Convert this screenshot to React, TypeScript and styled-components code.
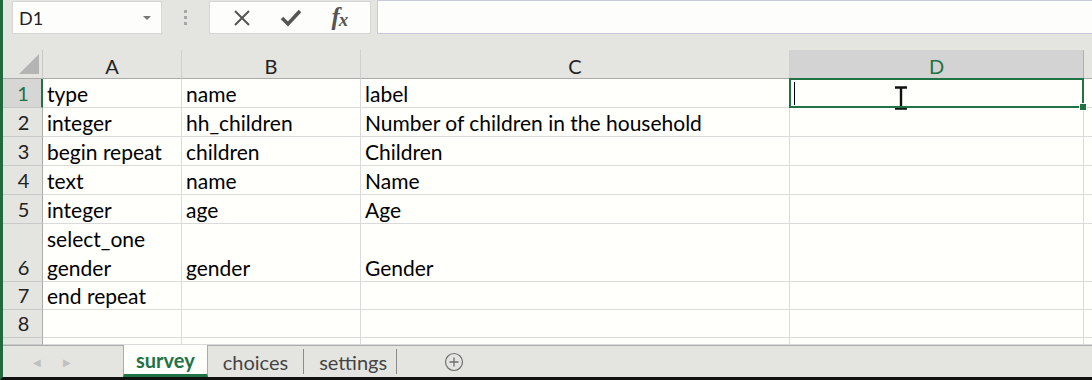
import styled, { createGlobalStyle } from "styled-components"

const GlobalStyle = createGlobalStyle`
  html, body {
    margin: 0;
    padding: 0;
    background: #e4e4e0;
  }
  * {
    box-sizing: border-box;
  }
`

const font = `"Lato", "Open Sans", "Liberation Sans", sans-serif`
const green = "#217346"

const columns = ["A", "B", "C", "D"]
const activeColumn = "D"

type RowData = {
  height: number
  cells: string[][]
}

// each cell is a list of lines (row 6 wraps onto two lines)
const rows: RowData[] = [
  { height: 29, cells: [["type"], ["name"], ["label"], []] },
  { height: 29, cells: [["integer"], ["hh_children"], ["Number of children in the household"], []] },
  { height: 29, cells: [["begin repeat"], ["children"], ["Children"], []] },
  { height: 29, cells: [["text"], ["name"], ["Name"], []] },
  { height: 29, cells: [["integer"], ["age"], ["Age"], []] },
  { height: 58, cells: [["select_one", "gender"], ["gender"], ["Gender"], []] },
  { height: 28, cells: [["end repeat"], [], [], []] },
  { height: 28, cells: [[], [], [], []] },
]

const sheets = ["survey", "choices", "settings"]

const App = () => {
  return (
    <>
      <GlobalStyle />
      <Window>
        <FormulaBar>
          <NameBox>
            <span>D1</span>
            <DropArrow />
          </NameBox>
          <Grip>
            <i />
            <i />
            <i />
          </Grip>
          <FormulaButtons>
            <IconButton>
              <svg width="18" height="18" viewBox="0 0 18 18">
                <path d="M2 2 L16 16 M16 2 L2 16" stroke="#555" strokeWidth="2" fill="none" />
              </svg>
            </IconButton>
            <IconButton>
              <svg width="22" height="18" viewBox="0 0 22 18">
                <path d="M2 9 L8 15 L20 2" stroke="#555" strokeWidth="3.6" fill="none" strokeLinejoin="miter" />
              </svg>
            </IconButton>
            <FxLabel>
              f<span>x</span>
            </FxLabel>
          </FormulaButtons>
          <FormulaInput />
        </FormulaBar>

        <Sheet $rows={rows.map((r) => r.height)}>
          <Corner>
            <svg width="20" height="20" viewBox="0 0 20 20">
              <path d="M20 0 L20 20 L0 20 Z" fill="#b4b4b4" />
            </svg>
          </Corner>
          {columns.map((c) => (
            <ColHead key={c} $active={c === activeColumn}>
              {c}
            </ColHead>
          ))}
          <HeadFiller />

          {rows.map((row, i) => (
            <Row key={i} index={i} row={row} />
          ))}

          <RowHead $active={false} />
          {columns.map((c) => (
            <Cell key={c} />
          ))}
          <Filler />
        </Sheet>

        <TabBar>
          <TabArrows>
            <span>◀</span>
            <span>▶</span>
          </TabArrows>
          {sheets.map((s, i) => (
            <Tab key={s} $active={i === 0} $last={i === sheets.length - 1}>
              {s}
            </Tab>
          ))}
          <AddSheet>
            <svg width="20" height="20" viewBox="0 0 20 20">
              <circle cx="10" cy="10" r="8.5" stroke="#6f6f6f" strokeWidth="1.2" fill="none" />
              <path d="M10 5.5 V14.5 M5.5 10 H14.5" stroke="#6f6f6f" strokeWidth="1.3" />
            </svg>
          </AddSheet>
        </TabBar>
      </Window>
    </>
  )
}

const Row = ({ index, row }: { index: number; row: RowData }) => {
  const selectedRow = index === 0
  return (
    <>
      <RowHead $active={selectedRow}>{index + 1}</RowHead>
      {row.cells.map((lines, ci) => {
        const selected = selectedRow && columns[ci] === activeColumn
        return (
          <Cell key={ci} $selected={selected}>
            {lines.length > 0 && (
              <CellText>
                {lines.map((l) => (
                  <div key={l}>{l}</div>
                ))}
              </CellText>
            )}
            {selected && (
              <>
                <Caret />
                <IBeam>
                  <svg width="16" height="24" viewBox="0 0 16 24">
                    <path d="M2 1.5 H14 M2 22.5 H14 M8 1.5 V22.5" stroke="#111" strokeWidth="2.4" fill="none" />
                  </svg>
                </IBeam>
              </>
            )}
          </Cell>
        )
      })}
      <Filler />
    </>
  )
}

const Window = styled.div`
  width: 1092px;
  height: 380px;
  display: flex;
  flex-direction: column;
  border-left: 3px solid #1f6b3f;
  border-bottom: 3px solid #111;
  background: #e4e4e0;
  font-family: ${font};
  overflow: hidden;
`

const FormulaBar = styled.div`
  height: 50px;
  display: flex;
  align-items: flex-start;
  padding-top: 1px;
`

const NameBox = styled.div`
  width: 150px;
  height: 33px;
  margin-left: 9px;
  background: #fdfdfb;
  border: 1px solid #d6d6d6;
  display: flex;
  align-items: center;
  justify-content: space-between;
  padding: 0 10px 0 6px;
  font-size: 18px;
  color: #222;
`

const DropArrow = styled.span`
  width: 0;
  height: 0;
  border-left: 4px solid transparent;
  border-right: 4px solid transparent;
  border-top: 4px solid #777;
`

const Grip = styled.div`
  width: 47px;
  height: 33px;
  display: flex;
  flex-direction: column;
  align-items: center;
  justify-content: center;
  gap: 3px;

  i {
    width: 3px;
    height: 3px;
    background: #a6a6a6;
    display: block;
  }
`

const FormulaButtons = styled.div`
  width: 162px;
  height: 33px;
  background: #fdfdfb;
  border: 1px solid #d6d6d6;
  display: flex;
  align-items: center;
  justify-content: space-around;
  padding: 0 8px;
`

const IconButton = styled.span`
  display: flex;
  align-items: center;
`

const FxLabel = styled.span`
  font-family: "Liberation Serif", serif;
  font-style: italic;
  font-size: 25px;
  line-height: 25px;
  color: #555;
  font-weight: bold;
  letter-spacing: -1px;

  span {
    font-size: 19px;
    position: relative;
    top: 1px;
  }
`

const FormulaInput = styled.div`
  flex: 1;
  height: 34px;
  margin-left: 6px;
  margin-top: -1px;
  background: #fdfdfb;
  border: 1px solid #c9c9dc;
  border-right: none;
`

const Sheet = styled.div<{ $rows: number[] }>`
  flex: 1;
  display: grid;
  grid-template-columns: 40px 139px 179px 429px 294px 1fr;
  grid-template-rows: 29px ${(p) => p.$rows.map((h) => `${h}px`).join(" ")} 1fr;
  background: #fffffb;
  overflow: hidden;
`

const Corner = styled.div`
  background: #e4e4e0;
  border-bottom: 1px solid #ababab;
  border-right: 1px solid #c8c8c8;
  display: flex;
  align-items: flex-end;
  justify-content: flex-end;
  padding: 0 3px 4px 0;
`

const ColHead = styled.div<{ $active: boolean }>`
  background: ${(p) => (p.$active ? "#d3d3d3" : "#e4e4e0")};
  color: ${(p) => (p.$active ? green : "#222")};
  border-bottom: 1px solid ${(p) => (p.$active ? green : "#ababab")};
  border-right: 1px solid ${(p) => (p.$active ? "#b0b0b0" : "#d0d0d0")};
  display: flex;
  align-items: center;
  justify-content: center;
  font-size: 20px;
  padding-top: 4px;
`

const HeadFiller = styled.div`
  background: #e4e4e0;
  border-bottom: 1px solid #ababab;
`

const RowHead = styled.div<{ $active: boolean }>`
  background: ${(p) => (p.$active ? "#d6d6d4" : "#e4e4e0")};
  color: ${(p) => (p.$active ? green : "#222")};
  border-bottom: 1px solid #c8c8c8;
  border-right: ${(p) => (p.$active ? `2px solid ${green}` : "1px solid #ababab")};
  display: flex;
  align-items: flex-end;
  justify-content: center;
  padding-left: 2px;
  font-size: 20px;
  line-height: 28px;
`

const Cell = styled.div<{ $selected?: boolean }>`
  position: relative;
  border-bottom: 1px solid #dadada;
  border-right: 1px solid #dadada;
  display: flex;
  align-items: flex-end;
  padding: 0 4px;
  font-size: 21px;
  color: #000;
  white-space: nowrap;

  ${(p) =>
    p.$selected &&
    `
    &::after {
      content: "";
      position: absolute;
      left: -1px;
      top: -1px;
      right: -1px;
      bottom: -1px;
      border: 2px solid ${green};
      pointer-events: none;
    }
    &::before {
      content: "";
      position: absolute;
      right: -4px;
      bottom: -4px;
      width: 6px;
      height: 6px;
      background: ${green};
      border: 1px solid #fff;
      z-index: 2;
    }
  `}
`

const CellText = styled.div`
  line-height: 29px;
  margin-bottom: -1px;
`

const Caret = styled.span`
  position: absolute;
  left: 4px;
  top: 3px;
  width: 1px;
  height: 23px;
  background: #000;
`

const IBeam = styled.span`
  position: absolute;
  left: 103px;
  top: 7px;
  display: flex;
`

const Filler = styled.div`
  border-bottom: 1px solid #dadada;
`

const TabBar = styled.div`
  height: 32px;
  display: flex;
  align-items: stretch;
  border-top: 1px solid #ababab;
  font-size: 20px;
  color: #444;
`

const TabArrows = styled.div`
  width: 120px;
  display: flex;
  align-items: center;
  gap: 22px;
  padding-left: 30px;
  font-size: 10px;
  color: #c0c0c0;
`

const Tab = styled.div<{ $active: boolean; $last: boolean }>`
  display: flex;
  align-items: center;
  padding: 0 ${(p) => (p.$active ? "12px" : p.$last ? "9px" : "15px")} 0
    ${(p) => (p.$active ? "12px" : "15px")};
  background: ${(p) => (p.$active ? "#fffffb" : "transparent")};
  color: ${(p) => (p.$active ? green : "#444")};
  font-weight: ${(p) => (p.$active ? 700 : 400)};
  border-bottom: ${(p) => (p.$active ? `3px solid ${green}` : "none")};
  border-left: ${(p) => (p.$active ? "1px solid #ababab" : "none")};
  border-right: 1px solid ${(p) => (p.$active ? "#ababab" : "#8a8a8a")};
  margin: ${(p) => (p.$active ? "-1px 0 0" : "3px 0")};
`

const AddSheet = styled.div`
  display: flex;
  align-items: center;
  margin-left: 47px;
`

export default App
